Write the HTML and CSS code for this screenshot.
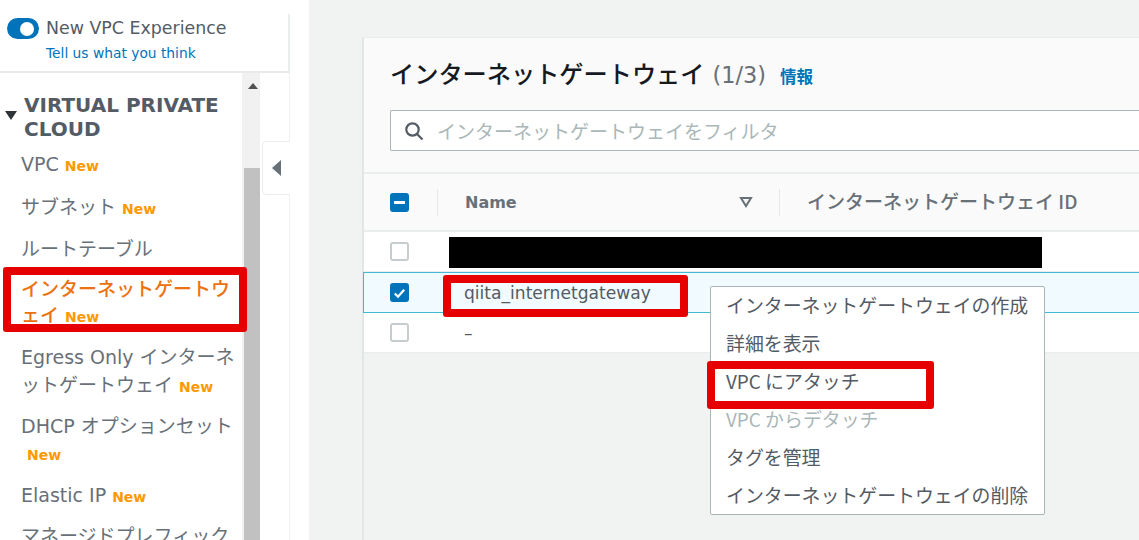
FILE: index.html
```html
<!DOCTYPE html>
<html lang="ja">
<head>
<meta charset="utf-8">
<title>インターネットゲートウェイ</title>
<link rel="stylesheet" href="styles.css">
</head>
<body>
<div class="page">
  <aside class="sidebar">
    <div class="experience">
      <span class="toggle"><span class="knob"></span></span>
      <div class="experience-text">
        <div class="experience-title">New VPC Experience</div>
        <a class="experience-link">Tell us what you think</a>
      </div>
    </div>
    <div class="nav-wrap">
      <nav class="nav">
        <div class="section">
          <svg class="caret" width="12" height="9" viewBox="0 0 12 9"><path d="M0 0h12L6 9z" fill="#2f3438"/></svg>
          <span class="section-title">VIRTUAL PRIVATE CLOUD</span>
        </div>
        <a class="item i-vpc">VPC <b class="new">New</b></a>
        <a class="item i-sub">サブネット <b class="new">New</b></a>
        <a class="item i-rt">ルートテーブル</a>
        <a class="item item-active">インターネットゲートウェイ <b class="new">New</b></a>
        <a class="item i-eg">Egress Only インターネットゲートウェイ <b class="new">New</b></a>
        <a class="item i-dh">DHCP オプションセット <b class="new new-block">New</b></a>
        <a class="item i-ip">Elastic IP <b class="new">New</b></a>
        <a class="item i-ml">マネージドプレフィックスリスト</a>
      </nav>
      <div class="scrollbar">
        <svg class="scroll-up" width="10" height="6" viewBox="0 0 10 6"><path d="M0 6L5 0l5 6z" fill="#505050"/></svg>
        <div class="scroll-thumb"></div>
      </div>
      <div class="collapse">
        <svg width="9" height="16" viewBox="0 0 9 16"><path d="M9 0v16L0 8z" fill="#687078"/></svg>
      </div>
    </div>
  </aside>
  <main class="main">
    <section class="card">
      <header class="card-head">
        <div class="title-row">
          <h1 class="title">インターネットゲートウェイ</h1>
          <span class="count">(1/3)</span>
          <a class="info">情報</a>
        </div>
        <div class="filter">
          <svg class="search" width="20" height="20" viewBox="0 0 20 20" fill="none" stroke="#545b64" stroke-width="2.2"><circle cx="8.5" cy="8.5" r="6.2"/><path d="M13 13l5.5 5.5"/></svg>
          <span class="placeholder">インターネットゲートウェイをフィルタ</span>
        </div>
      </header>
      <div class="thead">
        <span class="cell-check"><span class="check check-on"><span class="dash"></span></span></span>
        <span class="sep"></span>
        <span class="th-name">Name</span>
        <svg class="sort" width="14" height="12" viewBox="0 0 14 12" fill="none" stroke="#687078" stroke-width="2"><path d="M2 2h10L7 10z"/></svg>
        <span class="sep"></span>
        <span class="th-id">インターネットゲートウェイ ID</span>
      </div>
      <div class="row">
        <span class="cell-check"><span class="check"></span></span>
      </div>
      <div class="row row-selected">
        <span class="cell-check"><span class="check check-on"><svg width="16" height="16" viewBox="0 0 16 16" fill="none" stroke="#fff" stroke-width="2.4"><path d="M3 8.5l3.4 3.4L13 4.5"/></svg></span></span>
        <span class="cell-name">qiita_internetgateway</span>
      </div>
      <div class="row">
        <span class="cell-check"><span class="check"></span></span>
        <span class="cell-name">–</span>
      </div>
    </section>
  </main>
</div>

<div class="redact"></div>
<ul class="menu">
  <li>インターネットゲートウェイの作成</li>
  <li>詳細を表示</li>
  <li>VPC にアタッチ</li>
  <li class="disabled">VPC からデタッチ</li>
  <li>タグを管理</li>
  <li>インターネットゲートウェイの削除</li>
</ul>
<div class="mark mark-igw"></div>
<div class="mark mark-name"></div>
<div class="mark mark-attach"></div>
</body>
</html>
```
FILE: styles.css
```css
* { box-sizing: border-box; }
html, body { margin: 0; height: 100%; overflow: hidden; }
body {
  background: #fff;
  font-family: "DejaVu Sans", "Noto Sans CJK JP", sans-serif;
  color: #545b64;
}
.page { display: flex; height: 540px; width: 1139px; }

/* sidebar */
.sidebar { width: 309px; flex: none; display: flex; flex-direction: column; padding: 14px 19px 0 0; }
.experience {
  height: 59px; flex: none; display: flex; gap: 7px; padding: 4px 0 0 7px;
  border-bottom: 2px solid #e9ebeb; border-right: 2px solid #eaeded;
}
.toggle { width: 32px; height: 21px; border-radius: 11px; background: #0073bb; flex: none; display: flex; justify-content: flex-end; align-items: center; padding-right: 5px; }
.knob { width: 14px; height: 14px; border-radius: 50%; background: #fff; }
.experience-title { font-size: 17.4px; line-height: 21px; color: #545b64; white-space: nowrap; }
.experience-link { display: block; font-size: 13.8px; line-height: 16px; margin-top: 6px; color: #0073bb; white-space: nowrap; }
.nav-wrap { flex: 1; display: flex; min-height: 0; position: relative; border-right: 1px solid #eff0f0; }
.nav { width: 242px; flex: none; overflow: hidden; padding-top: 20px; }
.section { display: flex; align-items: center; gap: 7px; padding-left: 5px; }
.caret { flex: none; margin-bottom: 4px; }
.section-title { font-size: 20px; font-weight: 700; line-height: 24px; color: #545b64; width: 212px; }
.item { display: block; font-size: 19px; line-height: 26px; padding-left: 21px; padding-right: 5px; margin-top: 14px; color: #687078; line-break: loose; }
.new { font-size: 14px; color: #ff9900; font-weight: 700; }
.new-block { display: block; padding-left: 6px; margin-top: 3px; }
.i-vpc { margin-top: 10px; }
.i-sub { margin-top: 15px; }
.i-eg { margin-top: 13px; line-height: 28px; }
.i-dh { margin-top: 12px; }
.i-ml { margin-top: 13px; }
.item-active { color: #ec7211; font-weight: 500; }
.scrollbar { width: 18px; flex: none; background: #f1f1f1; display: flex; flex-direction: column; align-items: flex-end; }
.scroll-up { margin: 10px 2px 0 0; }
.scroll-thumb { width: 16px; margin-top: 79px; flex: 1; background: #c1c1c1; }
.collapse {
  position: absolute; left: 262px; top: 68px; width: 28px; height: 54px;
  background: #fff; border: 1px solid #eaeded; border-right: 0; border-radius: 5px 0 0 5px;
  display: flex; align-items: center; padding-left: 9px;
}

/* main */
.main { flex: 1; background: #f1f3f3; padding: 37px 0 0 53px; min-width: 0; }
.card { height: 100%; border-left: 2px solid #e3e6e6; border-top: 1px solid #eaeded; display: flex; flex-direction: column; }
.card-head { height: 136px; flex: none; background: #fafafa; padding: 16px 0 0 26px; border-bottom: 2px solid #eaeded; }
.title-row { display: flex; align-items: baseline; }
.title { margin: 0; font-size: 24.2px; line-height: 38px; font-weight: 500; color: #16191f; font-family: "Noto Sans CJK JP", sans-serif; }
.count { font-size: 22.4px; margin-left: 8px; color: #687078; font-family: "DejaVu Sans", sans-serif; }
.info { font-size: 16.5px; font-weight: 700; margin-left: 14px; color: #0073bb; font-family: "Noto Sans CJK JP", sans-serif; }
.filter { margin-top: 18px; height: 41px; background: #fff; border: 1px solid #aab7b8; border-right: 0; border-radius: 2px 0 0 2px; display: flex; align-items: center; padding-left: 13px; gap: 13px; }
.placeholder { font-size: 19px; color: #aab7b8; font-family: "Noto Sans CJK JP", sans-serif; }
.thead { height: 58px; flex: none; background: #fafafa; display: flex; align-items: center; border-bottom: 2px solid #eaeded; }
.cell-check { width: 73px; flex: none; padding-left: 26px; display: flex; }
.check { width: 19px; height: 19px; border: 2px solid #c7cdce; border-radius: 3px; background: #fff; display: flex; align-items: center; justify-content: center; }
.check-on { background: #0073bb; border-color: #0073bb; }
.dash { width: 11px; height: 3px; background: #fff; }
.sep { width: 1px; height: 27px; background: #e5e8e8; flex: none; }
.th-name { font-size: 16px; font-weight: 700; color: #687078; margin-left: 27px; width: 274px; flex: none; }
.sort { flex: none; margin-right: 26px; }
.th-id { font-size: 19px; font-weight: 500; color: #687078; margin: 0 0 3px 27px; white-space: nowrap; font-family: "Noto Sans CJK JP", sans-serif; }
.row { height: 40px; flex: none; background: #fff; display: flex; align-items: center; border-bottom: 1px solid #eaeded; }
.row-selected { background: #f1faff; height: 41px; margin-left: -1px; border: 1px solid #44b9d6; border-right: 0; }
.row-selected .cell-name { padding-top: 1px; }
.cell-name { font-size: 17.1px; color: #545b64; margin-left: 27px; }

/* overlays */
.redact { position: absolute; left: 449px; top: 237px; width: 593px; height: 31px; background: #000; }
.menu {
  position: absolute; left: 710px; top: 286px; width: 335px; height: 229px; margin: 0; padding: 0; list-style: none;
  background: #fff; border: 1px solid #aab7b8; border-radius: 2px;
}
.menu li { height: 38px; line-height: 35px; padding-left: 15px; font-size: 18.9px; color: #545b64; font-family: "Noto Sans CJK JP", sans-serif; white-space: nowrap; }
.menu .disabled { color: #aab7b8; }
.mark { position: absolute; border: 8px solid #e60000; border-radius: 3px; }
.mark-igw { left: 3px; top: 267px; width: 244px; height: 65px; }
.mark-name { left: 443px; top: 275px; width: 245px; height: 42px; }
.mark-attach { left: 707px; top: 361px; width: 227px; height: 48px; }
```
